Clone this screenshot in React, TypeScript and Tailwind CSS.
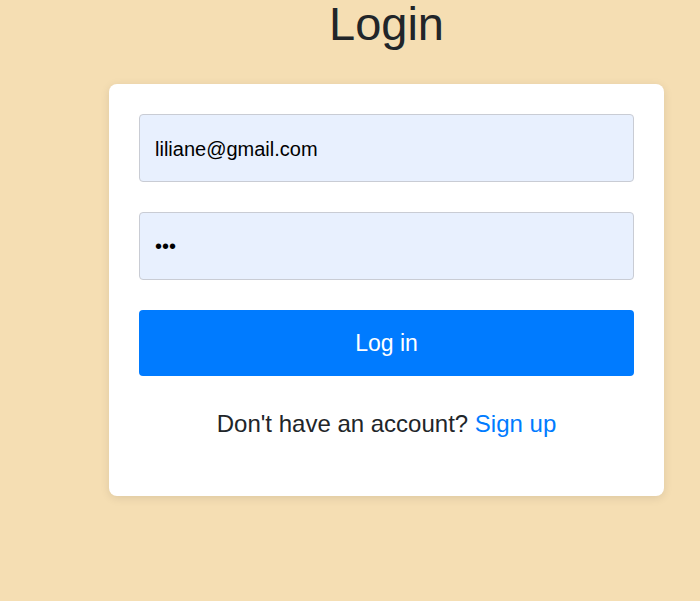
import { useState } from "react";

export default function App() {
  const [email, setEmail] = useState("liliane@gmail.com");
  const [password, setPassword] = useState("abc");

  return (
    <div className="min-h-[601px] w-full bg-[#f5deb3] font-['Liberation_Sans',Arial,sans-serif] text-[#212529]">
      <div className="ml-[109px] w-[555px]">
        <h1 className="text-center text-[47px] leading-none font-normal">Login</h1>
        <form
          className="mt-[37px] flex flex-col rounded-lg bg-white px-[30px] pt-[30px] pb-[54px] shadow-[0_2px_10px_rgba(0,0,0,0.1)]"
          onSubmit={(e) => e.preventDefault()}
        >
          <input
            type="email"
            value={email}
            onChange={(e) => setEmail(e.target.value)}
            className="h-[68px] w-full rounded border border-[#c9ccd4] bg-[#e8f0fe] px-[15px] pt-[3px] text-[20px] text-black outline-none"
          />
          <input
            type="password"
            value={password}
            onChange={(e) => setPassword(e.target.value)}
            className="mt-[30px] h-[68px] w-full rounded border border-[#c9ccd4] bg-[#e8f0fe] px-[15px] text-[20px] text-black outline-none"
          />
          <button
            type="submit"
            className="mt-[30px] h-[66px] w-full rounded bg-[#007bff] text-[23px] text-white"
          >
            Log in
          </button>
          <p className="mt-[30px] text-center text-[24px] leading-9">
            Don't have an account?{" "}
            <a href="#" className="text-[#007bff]">
              Sign up
            </a>
          </p>
        </form>
      </div>
    </div>
  );
}
